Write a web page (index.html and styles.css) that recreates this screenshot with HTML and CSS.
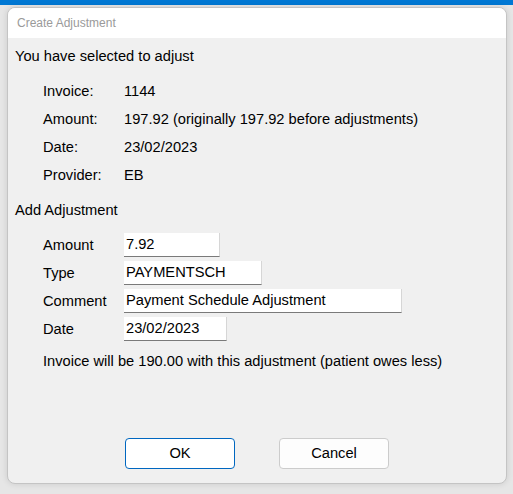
FILE: index.html
```html
<!DOCTYPE html>
<html>
<head>
<meta charset="utf-8">
<link rel="stylesheet" href="styles.css">
</head>
<body>
<div class="topbar"></div>
<div class="dialog">
  <div class="titlebar">Create Adjustment</div>
  <div class="content">
    <div class="line heading">You have selected to adjust</div>
    <div class="info">
      <div class="row"><span class="label">Invoice:</span><span>1144</span></div>
      <div class="row"><span class="label">Amount:</span><span>197.92 (originally 197.92 before adjustments)</span></div>
      <div class="row"><span class="label">Date:</span><span>23/02/2023</span></div>
      <div class="row"><span class="label">Provider:</span><span>EB</span></div>
    </div>
    <div class="line heading2">Add Adjustment</div>
    <div class="form">
      <div class="row"><span class="label">Amount</span><div class="field w-amount">7.92</div></div>
      <div class="row"><span class="label">Type</span><div class="field w-type">PAYMENTSCH</div></div>
      <div class="row"><span class="label">Comment</span><div class="field w-comment">Payment Schedule Adjustment</div></div>
      <div class="row"><span class="label">Date</span><div class="field w-date">23/02/2023</div></div>
    </div>
    <div class="line note">Invoice will be 190.00 with this adjustment (patient owes less)</div>
    <div class="footer">
      <div class="btn primary">OK</div>
      <div class="btn">Cancel</div>
    </div>
  </div>
</div>
</body>
</html>
```

FILE: styles.css
```css
html, body {
  margin: 0;
  padding: 0;
}
body {
  width: 513px;
  height: 494px;
  background: #e6e6e6;
  font-family: "Liberation Sans", Arial, sans-serif;
  font-size: 14.67px;
  color: #000;
  overflow: hidden;
}
.topbar {
  height: 5px;
  background: #0078d4;
}
.dialog {
  margin: 2px 0 0 7px;
  width: 498px;
  height: 475px;
  border: 1px solid #c4c4c4;
  border-radius: 8px;
  background: #f0f0f0;
  box-shadow: 0 0 6px rgba(0, 0, 0, 0.12);
  display: flex;
  flex-direction: column;
  overflow: hidden;
}
.titlebar {
  height: 30px;
  flex: none;
  background: #fff;
  color: #9a9a9a;
  font-size: 12px;
  line-height: 30px;
  padding-left: 9px;
}
.content {
  flex: 1;
  display: flex;
  flex-direction: column;
  padding: 4px 0 14px 7px;
}
.line {
  height: 28px;
  line-height: 28px;
}
.info {
  margin-top: 7px;
  padding-left: 28px;
}
.row {
  height: 28px;
  display: flex;
  align-items: center;
}
.label {
  width: 81px;
  flex: none;
}
.heading2 {
  margin-top: 7px;
}
.form {
  margin-top: 7px;
  padding-left: 28px;
}
.field {
  height: 23px;
  line-height: 23px;
  background: #fff;
  border-bottom: 1px solid #7a7a7a;
  border-right: 1px solid #d6d6d6;
  padding-left: 2px;
  box-sizing: content-box;
  white-space: nowrap;
}
.w-amount { width: 93px; }
.w-type { width: 135px; }
.w-comment { width: 275px; }
.w-date { width: 100px; }
.note {
  margin-top: 4px;
  padding-left: 28px;
}
.footer {
  margin-top: auto;
  display: flex;
  justify-content: center;
  gap: 44px;
  padding-right: 7px;
}
.btn {
  width: 108px;
  height: 29px;
  line-height: 29px;
  text-align: center;
  background: #fdfdfd;
  border: 1px solid #cccccc;
  border-radius: 4px;
}
.btn.primary {
  border-color: #0067c0;
  background: #fff;
}
```
